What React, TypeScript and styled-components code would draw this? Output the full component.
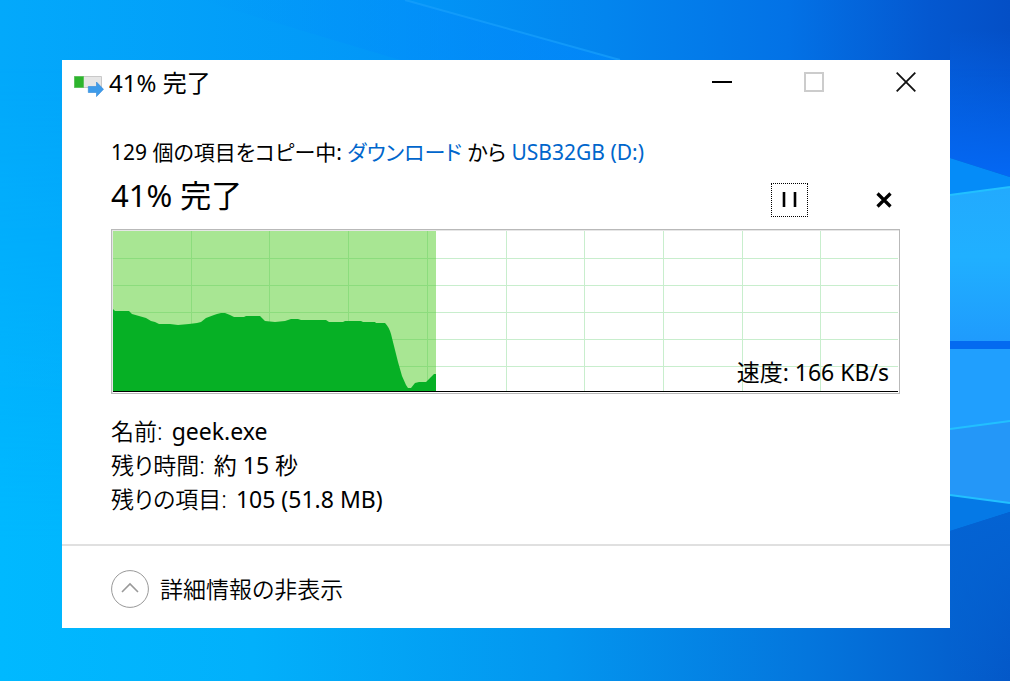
import React from 'react';
import styled, { createGlobalStyle } from 'styled-components';

const GlobalStyle = createGlobalStyle`
  * { box-sizing: border-box; }
  body {
    margin: 0;
    color: #000;
    font-family: 'Noto Sans', 'Noto Sans CJK JP', sans-serif;
    font-size: 23px;
    font-weight: 400;
    line-height: 34px;
    font-feature-settings: 'palt';
  }
`;

const Desktop = styled.main`
  position: relative;
  min-height: 100vh;
  padding: 60px 60px 53px 62px;
  display: flex;
  background: #00a0fa;
`;

const Wallpaper = styled.svg`
  position: absolute;
  inset: 0;
  width: 100%;
  height: 100%;
`;

const Dialog = styled.section`
  position: relative;
  flex: 1;
  min-width: 0;
  display: flex;
  flex-direction: column;
  background: #fff;
`;

const TitleBar = styled.header`
  display: flex;
  align-items: center;
  height: 46px;
  padding-left: 12px;
  gap: 5px;
`;

const Title = styled.h1`
  flex: 1;
  margin: 0;
  font-size: 24px;
  font-weight: inherit;
`;

const IconButton = styled.button<{ $width: number; $height: number }>`
  display: grid;
  place-items: center;
  width: ${(p) => p.$width}px;
  height: ${(p) => p.$height}px;
  padding: 0;
  border: 0;
  background: none;
  color: #000;
`;

const PauseButton = styled(IconButton)`
  border: 1px dotted #000;
`;

const WindowControls = styled.div`
  display: flex;
  align-self: flex-start;
  gap: 4px;
`;

const Body = styled.div`
  flex: 1;
  padding: 29px 50px 26px 49px;
`;

const Source = styled.p`
  margin: 0;
  font-size: 21px;
`;

const Place = styled.a`
  color: #0066cc;
  text-decoration: none;
`;

const StatusRow = styled.div`
  display: flex;
  justify-content: space-between;
  height: 60px;
`;

const Status = styled.h2`
  margin: 0;
  font-size: 31px;
  line-height: 52px;
  font-weight: inherit;
`;

const Actions = styled.div`
  display: flex;
  gap: 60px;
  padding-top: 14px;
`;

const Chart = styled.figure`
  position: relative;
  height: 165px;
  margin: 0 0 20px;
  padding: 1px;
  border: 1px solid #b9b9b9;
  box-shadow: inset 1px 1px #e6e6e6;
`;

const Plot = styled.svg`
  display: block;
  width: 100%;
  height: 100%;
`;

const Speed = styled.figcaption`
  position: absolute;
  right: 10px;
  bottom: 4px;
`;

const Details = styled.dl`
  margin: 0;
`;

const Detail = styled.div`
  display: flex;
  gap: 9px;

  dt, dd { margin: 0; }
  dt { font-weight: 350; }
`;

const Footer = styled.footer`
  display: flex;
  align-items: center;
  height: 84px;
  padding: 4px 49px 0;
  border-top: 2px solid #e0e0e0;
`;

const Toggle = styled.button`
  display: flex;
  align-items: center;
  gap: 11px;
  padding: 0;
  border: 0;
  background: none;
  color: inherit;
  font: inherit;
  font-weight: 350;
  font-feature-settings: inherit;
`;

const gridX = [78, 156, 235, 314, 393, 471, 550, 629, 707];
const gridY = [27, 54, 81, 108, 135];

const speedCurve =
  'M0 161V78L2 80H16L19 83L33 87L38 90L42 91L46 93H57L65 94L76 93L84 92L88 91L93 87L101 84L104 83L108 82H112L117 84L121 86H131L133 85H147L152 90L162 91L172 90L178 88H185L188 89H213L216 91H230L232 90H248L250 91H262L263 92H272Q276 96 278 103L281 115L285 131L289 145L293 154L295 157H298L302 152L306 151H313L318 146L321 143H323V161Z';

const details = [
  ['名前:', 'geek.exe'],
  ['残り時間:', '約 15 秒'],
  ['残りの項目:', '105 (51.8 MB)'],
];

function Backdrop() {
  return (
    <Wallpaper viewBox="0 0 1010 681" preserveAspectRatio="none" aria-hidden="true">
      <defs>
        <linearGradient id="sky" x1="0" y1="0" x2="1" y2="0">
          <stop offset="0" stopColor="#03a9fb" />
          <stop offset=".4" stopColor="#0296f7" />
          <stop offset=".6" stopColor="#0385ee" />
          <stop offset=".78" stopColor="#0372e6" />
          <stop offset=".92" stopColor="#0458d0" />
          <stop offset="1" stopColor="#044fc6" />
        </linearGradient>
        <linearGradient id="floor" x1="0" y1="0" x2="1" y2="0">
          <stop offset="0" stopColor="#00b9ff" />
          <stop offset=".25" stopColor="#02b0fb" />
          <stop offset=".55" stopColor="#0396ef" />
          <stop offset=".8" stopColor="#0476dd" />
          <stop offset=".93" stopColor="#0463d0" />
          <stop offset="1" stopColor="#0458c8" />
        </linearGradient>
        <linearGradient id="fade" x1="0" y1="0" x2="0" y2="1">
          <stop offset=".1" stopColor="#fff" stopOpacity="0" />
          <stop offset=".8" stopColor="#fff" />
        </linearGradient>
        <mask id="lower"><rect width="1010" height="681" fill="url(#fade)" /></mask>
        <linearGradient id="beam" x1="0" y1="0" x2="1" y2="0">
          <stop offset="0" stopColor="#0288fc" stopOpacity="0" />
          <stop offset="1" stopColor="#0288fc" />
        </linearGradient>
        <linearGradient id="pane" x1="0" y1="0" x2="0" y2="1">
          <stop offset="0" stopColor="#22aafe" />
          <stop offset=".45" stopColor="#20b0ff" />
          <stop offset="1" stopColor="#1f9bfd" />
        </linearGradient>
        <linearGradient id="shade" x1="0" y1="0" x2="0" y2="1">
          <stop offset="0" stopColor="#0468f4" stopOpacity="0" />
          <stop offset="1" stopColor="#0468f4" />
        </linearGradient>
        <linearGradient id="base" x1="0" y1="0" x2="0" y2="1">
          <stop offset="0" stopColor="#0463d3" />
          <stop offset="1" stopColor="#0463d3" stopOpacity="0" />
        </linearGradient>
      </defs>
      <rect width="1010" height="681" fill="url(#sky)" />
      <rect width="1010" height="681" fill="url(#floor)" mask="url(#lower)" />
      <path d="M950 30H1010V177L950 158Z" fill="url(#shade)" />
      <path d="M950 158L1010 177V187L950 195Z" fill="#058cf8" />
      <path d="M950 195L1010 187V341H950Z" fill="url(#pane)" />
      <rect x="950" y="341" width="60" height="8" fill="#046af0" />
      <path d="M950 349H1010V421L950 429Z" fill="#209ffe" />
      <path d="M950 429L1010 421V503L950 495Z" fill="#2497f8" />
      <path d="M950 495L1010 503V512L950 531Z" fill="#0579e6" />
      <path d="M950 531L1010 512V681H950Z" fill="url(#base)" />
      <path d="M950 195L1010 187M950 429L1010 421M950 495L1010 503" stroke="#22c0ff" strokeWidth="2" />
      <path d="M405 0L620 60H400L200 0Z" fill="url(#beam)" opacity=".7" />
      <path d="M405 0L620 60" stroke="#18a0fc" strokeWidth="2" opacity=".7" />
    </Wallpaper>
  );
}

export default function App() {
  return (
    <>
      <GlobalStyle />
      <Desktop>
        <Backdrop />
        <Dialog aria-label="41% 完了">
          <TitleBar>
            <svg width="30" height="28" viewBox="0 0 30 28" aria-hidden="true">
              <path d="M.5 7.500H27.500V18.500H.5Z" fill="#e6e6e6" stroke="#c9c9c9" />
              <path d="M.5 7.500H9.500V18.500H.5Z" fill="#2db52d" stroke="#5fc25f" />
              <path d="M14.300 17.500H22.500V13L29.500 20.300L22.500 27.600V23.500H14.300Z" fill="#3d9bea" stroke="#2f87d6" strokeWidth=".6" />
            </svg>
            <Title>41% 完了</Title>
            <WindowControls>
              <IconButton $width={88} $height={44} aria-label="最小化">
                <svg width="20" height="20"><path d="M0 9H20V11H0Z" /></svg>
              </IconButton>
              <IconButton $width={88} $height={44} aria-label="最大化" disabled>
                <svg width="20" height="20"><path d="M1 1H19V19H1Z" fill="none" stroke="#ccc" strokeWidth="2" /></svg>
              </IconButton>
              <IconButton $width={88} $height={44} aria-label="閉じる">
                <svg width="20" height="20"><path d="M.7 .7L19.300 19.300M19.300 .7L.7 19.300" stroke="#111" strokeWidth="1.800" /></svg>
              </IconButton>
            </WindowControls>
          </TitleBar>
          <Body>
            <Source>
              129 個の項目をコピー中: <Place href="#downloads">ダウンロード</Place> から{' '}
              <Place href="#usb">USB32GB (D:)</Place>
            </Source>
            <StatusRow>
              <Status>41% 完了</Status>
              <Actions>
                <PauseButton $width={37} $height={34} aria-label="一時停止">
                  <svg width="17" height="16"><path d="M1.700 0H4.300V15H1.700ZM12.700 0H15.300V15H12.700Z" /></svg>
                </PauseButton>
                <IconButton $width={32} $height={34} aria-label="キャンセル">
                  <svg width="16" height="16"><path d="M1.500 1.500L14.500 14.500M14.500 1.500L1.500 14.500" stroke="#000" strokeWidth="3.200" /></svg>
                </IconButton>
              </Actions>
            </StatusRow>
            <Chart>
              <Plot viewBox="0 0 785 161" preserveAspectRatio="none" aria-hidden="true">
                <rect width="323" height="161" fill="#a8e693" />
                {gridX.map((x) => (
                  <rect key={x} x={x} width="1" height="161" fill={x < 323 ? '#8cdc7d' : '#c8eecd'} />
                ))}
                {gridY.map((y) => (
                  <g key={y}>
                    <rect y={y} width="323" height="1" fill="#8cdc7d" />
                    <rect x="323" y={y} width="462" height="1" fill="#c8eecd" />
                  </g>
                ))}
                <path d={speedCurve} fill="#06b025" />
                <rect y="160" width="785" height="1" fill="#000" />
              </Plot>
              <Speed>速度: 166 KB/s</Speed>
            </Chart>
            <Details>
              {details.map(([label, value]) => (
                <Detail key={label}>
                  <dt>{label}</dt>
                  <dd>{value}</dd>
                </Detail>
              ))}
            </Details>
          </Body>
          <Footer>
            <Toggle aria-expanded="true">
              <svg width="38" height="38" fill="none" aria-hidden="true">
                <circle cx="19" cy="19" r="18.400" stroke="#999" />
                <path d="M11 22L19 14L27 22" stroke="#999" strokeWidth="1.600" />
              </svg>
              詳細情報の非表示
            </Toggle>
          </Footer>
        </Dialog>
      </Desktop>
    </>
  );
}
